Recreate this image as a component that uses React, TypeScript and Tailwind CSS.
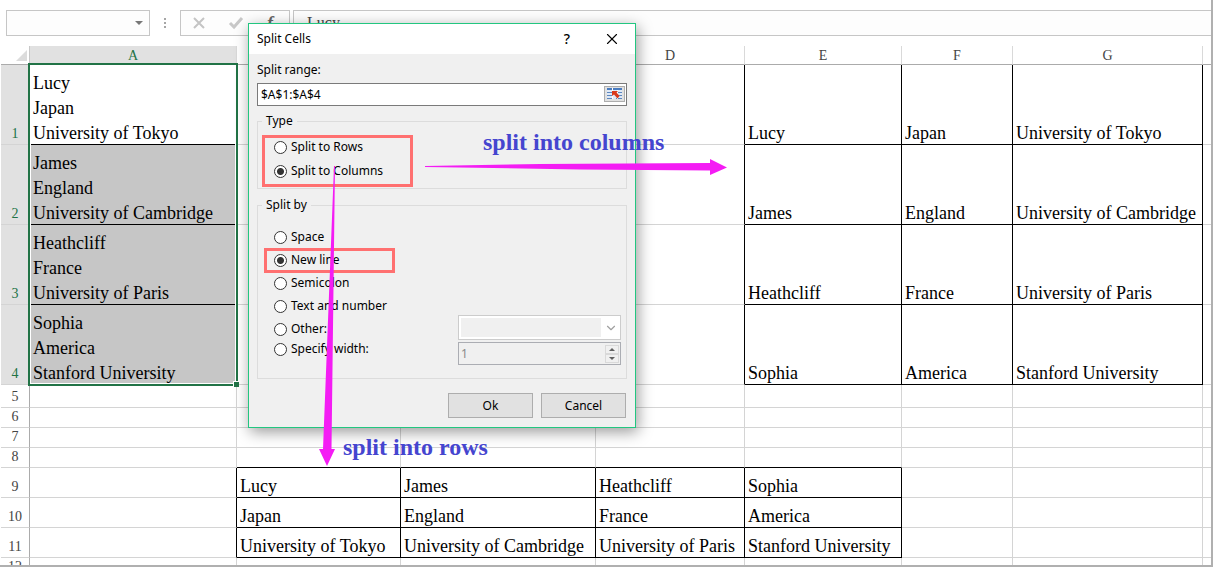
import { ChevronDown, X } from "lucide-react";
import type { ReactNode } from "react";

type Split = [string, string, string];

const PEOPLE: Split[] = [
  ["Lucy", "Japan", "University of Tokyo"],
  ["James", "England", "University of Cambridge"],
  ["Heathcliff", "France", "University of Paris"],
  ["Sophia", "America", "Stanford University"],
];

const COLUMNS = ["A", "B", "C", "D", "E", "F", "G", ""];

const ROW_HEIGHTS = [
  "h-20", "h-20", "h-20", "h-20",
  "h-[23px]", "h-5", "h-5", "h-5",
  "h-[30px]", "h-[30px]", "h-[30px]", "h-5",
];

// rows and columns are zero based, column 0 is A
function cellContent(row: number, col: number): ReactNode {
  if (row < 4 && col === 0) {
    return (
      <div className="-mb-0.5 leading-[25px]">
        {PEOPLE[row].map((line) => (
          <div key={line}>{line}</div>
        ))}
      </div>
    );
  }
  if (row < 4 && col >= 4 && col <= 6) return PEOPLE[row][col - 4];
  if (row >= 8 && row <= 10 && col >= 1 && col <= 4) {
    return PEOPLE[col - 1][row - 8];
  }
  return null;
}

function cellBorders(row: number, col: number) {
  const blackRight =
    (row < 4 && col >= 3 && col <= 6) || (row >= 8 && row <= 10 && col <= 4);
  const blackBottom =
    (row < 4 && (col === 0 || (col >= 4 && col <= 6))) ||
    (row >= 7 && row <= 10 && col >= 1 && col <= 4);
  return `${blackRight ? "border-r-black" : "border-r-[#d4d4d4]"} ${
    blackBottom ? "border-b-black" : "border-b-[#d4d4d4]"
  }`;
}

function FormulaBar() {
  return (
    <div className="flex h-[46px] items-start pl-[5px] pt-2.5">
      <div className="flex h-[26px] w-36 items-center justify-end border border-[#c6c6c6] bg-[#fdfdfd] pr-1.5">
        <svg width="8" height="4" viewBox="0 0 8 4" fill="#777">
          <path d="M0 0h8L4 4z" />
        </svg>
      </div>
      <svg width="30" height="26" viewBox="0 0 30 26" fill="#a6a6a6">
        <path d="M14 8h2v2h-2zM14 12h2v2h-2zM14 16h2v2h-2z" />
      </svg>
      <div className="flex h-[26px] w-[110px] items-center border border-[#c6c6c6] bg-[#fdfdfd]">
        <svg width="108" height="24" viewBox="0 0 108 24" fill="none">
          <path d="M13 7l10 10M23 7L13 17" stroke="#c4c4c4" strokeWidth="2" />
          <path d="M49 12l4 4 8-9" stroke="#c8c8c8" strokeWidth="3" />
          <text x="86" y="18" className="fill-[#666] font-['Liberation_Serif',serif] text-lg font-bold italic">
            f
          </text>
          <text x="92" y="20" className="fill-[#666] font-['Liberation_Serif',serif] text-xs italic">
            x
          </text>
        </svg>
      </div>
      <div className="ml-[3px] h-[26px] flex-1 border border-r-0 border-[#c6c6c6] bg-[#fdfdfd] pl-[13px] text-base leading-6 text-[#444]">
        Lucy
      </div>
    </div>
  );
}

function Sheet() {
  return (
    <table className="w-full table-fixed border-separate border-spacing-0">
      <colgroup>
        <col className="w-[29px]" />
        <col className="w-[207px]" />
        <col className="w-[164px]" />
        <col className="w-[195px]" />
        <col className="w-[149px]" />
        <col className="w-[157px]" />
        <col className="w-[111px]" />
        <col className="w-[190px]" />
        <col />
      </colgroup>
      <thead>
        <tr className="h-[19px] text-sm leading-4 text-[#444]">
          <th className="border-b border-r border-[#ababab] border-r-[#c8c8c8] p-0">
            <svg className="ml-auto mr-0.5" width="11" height="11" viewBox="0 0 11 11" fill="#dcdcdc">
              <path d="M11 0v11H0z" />
            </svg>
          </th>
          {COLUMNS.map((name, i) => (
            <th
              key={i}
              className={`border-b border-b-[#ababab] p-0 pt-0.5 font-normal ${
                i === 0 ? "bg-[#e1e1e1] text-[#217346]" : ""
              } ${i < 7 ? "border-r border-r-[#d9d9d9]" : ""}`}
            >
              {name}
            </th>
          ))}
        </tr>
      </thead>
      <tbody>
        {ROW_HEIGHTS.map((height, row) => (
          <tr key={row} className={height}>
            <th
              className={`border-b border-r border-b-[#d4d4d4] border-r-[#ababab] p-0 pb-px align-bottom text-sm leading-[18px] font-normal ${
                row < 4 ? "bg-[#e1e1e1] text-[#217346]" : "text-[#444]"
              }`}
            >
              {row + 1}
            </th>
            {COLUMNS.map((_, col) => (
              <td
                key={col}
                className={`border-b p-0 pl-[3px] align-bottom text-lg whitespace-nowrap ${
                  col < 7 ? "border-r" : ""
                } ${cellBorders(row, col)} ${
                  col === 0 && row > 0 && row < 4 ? "bg-[#c6c6c6]" : ""
                } ${row === 0 && col === 0 ? "relative" : ""} ${
                  row >= 4 && row < 8 ? "leading-4" : "leading-[22px]"
                }`}
              >
                {cellContent(row, col)}
                {row === 0 && col === 0 && (
                  <div className="absolute -top-0.5 -left-0.5 h-[323px] w-[210px] border-2 border-[#217346]">
                    <div className="h-full border border-white" />
                    <div className="absolute -right-[3px] -bottom-[3px] size-1.5 border-t border-l border-white bg-[#217346]" />
                  </div>
                )}
              </td>
            ))}
          </tr>
        ))}
      </tbody>
    </table>
  );
}

interface RadioProps {
  name: string;
  label: string;
  checked?: boolean;
}

function Radio({ name, label, checked = false }: RadioProps) {
  return (
    <label className="flex items-center gap-1 leading-[18px]">
      <input
        type="radio"
        name={name}
        defaultChecked={checked}
        className="size-[13px] appearance-none rounded-full border border-[#333] bg-white checked:bg-[radial-gradient(circle,#333_0_3px,#fff_4px)]"
      />
      {label}
    </label>
  );
}

function Dialog() {
  return (
    <form
      role="dialog"
      aria-label="Split Cells"
      className="absolute top-[23px] left-[248px] w-[388px] border border-[#22c680] bg-[#f0f0f0] pb-[9px] font-['Noto_Sans',sans-serif] text-xs text-black shadow-[2px_4px_14px_rgba(0,0,0,0.4)]"
    >
      <div className="flex h-[30px] items-center bg-white pr-3.5 pl-2">
        <span className="flex-1">Split Cells</span>
        <button type="button" aria-label="Help" className="w-3 text-sm font-medium">
          ?
        </button>
        <button type="button" aria-label="Close" className="ml-[30px]">
          <X size={18} strokeWidth={1.5} />
        </button>
      </div>

      <div className="px-2 pt-[7px]">
        <label htmlFor="range" className="block leading-[18px]">
          Split range:
        </label>
        <div className="mt-1 flex h-[23px] items-center border border-[#7a7a7a] bg-white pr-px">
          <input id="range" defaultValue="$A$1:$A$4" className="min-w-0 flex-1 pl-[3px] outline-none" />
          <button
            type="button"
            aria-label="Pick range"
            className="mb-0.5 flex h-4 w-[21px] items-center justify-center border border-[#adadad] bg-[#e1e1e1]"
          >
            <RangeIcon />
          </button>
        </div>

        <fieldset className="mt-1.5 h-[77px] border border-[#dcdcdc] pl-4">
          <legend className="-ml-3 px-1 leading-[18px]">Type</legend>
          <div className="flex flex-col gap-1.5 pt-2">
            <Radio name="type" label="Split to Rows" />
            <Radio name="type" label="Split to Columns" checked />
          </div>
        </fieldset>

        <fieldset className="mt-[7px] h-[183px] border border-[#dcdcdc] pr-[5px] pl-4">
          <legend className="-ml-3 px-1 leading-[18px]">Split by</legend>
          <div className="mt-3.5 flex flex-col gap-[5px]">
            <Radio name="by" label="Space" />
            <Radio name="by" label="New line" checked />
            <Radio name="by" label="Semicolon" />
            <Radio name="by" label="Text and number" />
          </div>
          <div className="flex justify-between">
            <div className="flex flex-col gap-0.5 pt-[5px]">
              <Radio name="by" label="Other:" />
              <Radio name="by" label="Specify width:" />
            </div>
            <div className="flex w-[163px] flex-col gap-0.5">
              <div className="relative h-[25px] border border-[#cccccc] bg-white p-0.5">
                <select
                  aria-label="Other separator"
                  disabled
                  className="block h-[19px] w-[140px] appearance-none bg-[#f0f0f0]"
                />
                <ChevronDown className="absolute top-[5px] right-0.5 text-[#a0a0a0]" size={14} />
              </div>
              <div className="flex h-[23px] items-center border border-[#abadb3] pr-px">
                <input
                  aria-label="Width"
                  disabled
                  defaultValue="1"
                  className="min-w-0 flex-1 pl-0.5 text-[#8a8a8a]"
                />
                <div className="flex flex-col">
                  <SpinButton label="Increase" path="M0 3h6L3 0z" />
                  <SpinButton label="Decrease" path="M0 0h6L3 3z" />
                </div>
              </div>
            </div>
          </div>
        </fieldset>

        <div className="mt-3.5 flex justify-end gap-2 pr-px">
          <button type="button" className="h-[25px] w-[85px] border border-[#adadad] bg-[#e1e1e1]">
            Ok
          </button>
          <button type="button" className="h-[25px] w-[85px] border border-[#adadad] bg-[#e1e1e1]">
            Cancel
          </button>
        </div>
      </div>
    </form>
  );
}

function SpinButton({ label, path }: { label: string; path: string }) {
  return (
    <button
      type="button"
      disabled
      aria-label={label}
      className="flex h-[9px] w-3.5 items-center justify-center border border-[#d9d9d9]"
    >
      <svg width="6" height="3" viewBox="0 0 6 3" fill="#606060">
        <path d={path} />
      </svg>
    </button>
  );
}

function RangeIcon() {
  return (
    <svg width="15" height="11" viewBox="0 0 15 11">
      <path fill="#dfe9f6" d="M0 0h15v11H0z" />
      <path fill="#4a7cc0" d="M0 0h5v2H0zM6 0h9v2H6z" />
      <path stroke="#5d87bf" d="M0 4.500h5M10 4.500h5M0 7.500h5M11 7.500h4M0 10.500h6M9 10.500h6" />
      <path stroke="#fff" d="M5.500 0v11M10.500 2v9" />
      <path fill="#d9391c" d="M5 3h6L9.500 4.500 12.500 8l-2 2.500-3.500-4L5 8z" />
    </svg>
  );
}

function Annotations() {
  return (
    <div className="pointer-events-none absolute inset-0 text-2xl leading-7 font-bold text-[#4545cf]">
      <div className="absolute top-[135px] left-[262px] h-[52px] w-[151px] border-3 border-[#ff7070]" />
      <div className="absolute top-[248px] left-[264px] h-[25px] w-[131px] border-3 border-[#ff7070]" />
      <svg className="absolute top-0 left-0" width="760" height="480" viewBox="0 0 760 480" fill="#f41cf4">
        <path d="M425 166l115-2 170-1v-4l17 8.500-17 7.500v-4.500l-130-1-155-2.500z" />
        <path d="M334 166h1l-3.500 283h3.500l-8 17-8-17h4z" />
      </svg>
      <span className="absolute top-32 left-[483px]">split into columns</span>
      <span className="absolute top-[433px] left-[343px]">split into rows</span>
    </div>
  );
}

export default function App() {
  return (
    <div className="relative h-screen overflow-hidden bg-[#b0b0b0] pr-0.5 pb-0.5 font-['Liberation_Serif',serif] text-black">
      <div className="h-full overflow-hidden bg-white pl-px">
        <FormulaBar />
        <Sheet />
      </div>
      <Dialog />
      <Annotations />
    </div>
  );
}
